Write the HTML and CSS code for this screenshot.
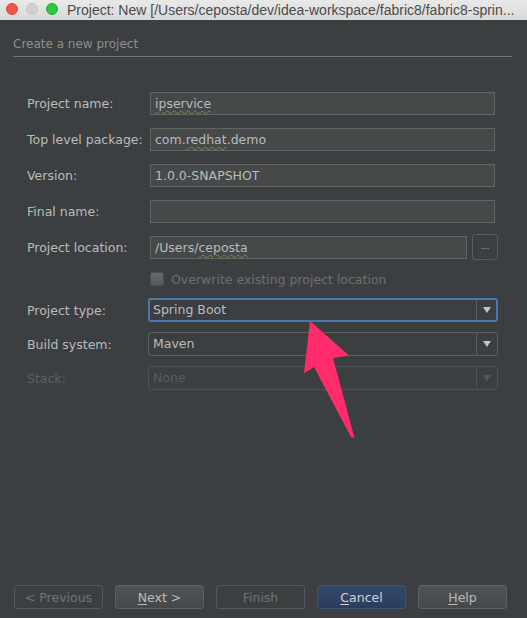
FILE: index.html
```html
<!DOCTYPE html>
<html>
<head>
<meta charset="utf-8">
<link rel="stylesheet" href="styles.css">
</head>
<body>
<div class="window">
  <div class="titlebar">
    <span class="light red"></span>
    <span class="light gray"></span>
    <span class="light green"></span>
    <span class="title">Project: New [/Users/ceposta/dev/idea-workspace/fabric8/fabric8-sprin...</span>
  </div>
  <div class="heading">Create a new project</div>
  <div class="form">
    <div class="row"><label class="label">Project name:</label><div class="field"><span class="typo">ipservice</span></div></div>
    <div class="row"><label class="label">Top level package:</label><div class="field">com.<span class="typo">redhat</span>.demo</div></div>
    <div class="row"><label class="label">Version:</label><div class="field">1.0.0-SNAPSHOT</div></div>
    <div class="row"><label class="label">Final name:</label><div class="field"></div></div>
    <div class="row"><label class="label">Project location:</label>
      <div class="locrow"><div class="field loc">/Users/<span class="typo">ceposta</span></div><div class="browse">...</div></div>
    </div>
    <div class="row check-row"><span></span>
      <div class="checkwrap"><span class="checkbox"></span><span class="checklabel">Overwrite existing project location</span></div>
    </div>
    <div class="row combo-row"><label class="label">Project type:</label>
      <div class="combo focused"><span class="combo-text">Spring Boot</span><span class="combo-btn"><span class="tri"></span></span></div>
    </div>
    <div class="row combo-row"><label class="label">Build system:</label>
      <div class="combo"><span class="combo-text">Maven</span><span class="combo-btn"><span class="tri"></span></span></div>
    </div>
    <div class="row combo-row"><label class="label disabled">Stack:</label>
      <div class="combo disabled"><span class="combo-text">None</span><span class="combo-btn"><span class="tri"></span></span></div>
    </div>
  </div>
  <div class="footer">
    <div class="btn off">&lt; Previous</div>
    <div class="btn"><u>N</u>ext &gt;</div>
    <div class="btn off">Finish</div>
    <div class="btn primary"><u>C</u>ancel</div>
    <div class="btn"><u>H</u>elp</div>
  </div>
  <svg class="arrow" width="527" height="618" viewBox="0 0 527 618">
    <polygon points="310,321 349,355.5 333,358 354.5,438 351,437 314,367 304,373.5" fill="#ff2b6b"/>
  </svg>
</div>
</body>
</html>
```
FILE: styles.css
```css
* { box-sizing: border-box; }
html, body { margin: 0; padding: 0; }
body {
  width: 527px;
  height: 618px;
  overflow: hidden;
  background: #3c3f41;
  font-family: "DejaVu Sans", sans-serif;
  font-size: 12.5px;
  color: #bbbbbb;
}
.window {
  position: relative;
  width: 527px;
  height: 618px;
  display: flex;
  flex-direction: column;
  background: #3c3f41;
}
.titlebar {
  height: 20px;
  flex: none;
  display: flex;
  align-items: center;
  padding-left: 6px;
  background: linear-gradient(#e9e9e9, #d9d9d9);
}
.light {
  width: 12px;
  height: 12px;
  border-radius: 50%;
  margin-right: 8px;
  margin-top: -2px;
  flex: none;
}
.light.red { background: #f2524d; border: 1px solid #de4541; }
.light.gray { background: #d0d0d0; border: 1px solid #c2c2c2; }
.light.green { background: #2fc841; border: 1px solid #26ad35; }
.title {
  margin-left: 1px;
  font-family: "Liberation Sans", Arial, sans-serif;
  font-size: 14px;
  color: #4b4b4b;
  white-space: nowrap;
  margin-top: -1px;
}
.heading {
  margin: 17px 15px 0 13px;
  padding-bottom: 4px;
  line-height: 15px;
  font-size: 12px;
  color: #8e8e8e;
  border-bottom: 1px solid #737373;
}
.form {
  margin-top: 28px;
  padding: 0 29px 0 27px;
}
.row {
  display: grid;
  grid-template-columns: 123px 1fr;
  align-items: center;
  height: 36px;
}
.check-row { height: 28px; }
.combo-row { height: 34px; }
.label {
  color: #bbbbbb;
  white-space: nowrap;
  line-height: 15px;
}
.label.disabled { color: #5e6062; }
.field {
  height: 23px;
  width: 345px;
  background: #45494a;
  border: 1px solid #646464;
  padding: 0 4px;
  line-height: 21px;
  color: #bbbbbb;
  white-space: nowrap;
}
.typo {
  text-decoration: underline wavy #5f9a45;
  text-decoration-thickness: 1px;
  text-underline-offset: 2px;
}
.locrow {
  display: flex;
  align-items: center;
  gap: 5px;
}
.field.loc { width: 317px; }
.browse {
  width: 26px;
  height: 26px;
  border: 1px solid #5a5c5e;
  border-radius: 3px;
  display: flex;
  align-items: center;
  justify-content: center;
  font-size: 9px;
  color: #bbbbbb;
  padding-bottom: 2px;
}
.checkwrap {
  display: flex;
  align-items: center;
  gap: 7px;
}
.checkbox {
  width: 14px;
  height: 14px;
  border-radius: 2px;
  background: linear-gradient(#67696b, #56595b);
  border: 1px solid #4b4e50;
}
.checklabel { color: #6d6f70; }
.combo {
  margin-left: -2px;
  width: 350px;
  height: 24px;
  border: 1px solid #5e6060;
  border-radius: 3px;
  display: flex;
  align-items: stretch;
}
.combo.focused {
  border: 2px solid #4a78ae;
}
.combo-text {
  flex: 1;
  padding-left: 4px;
  line-height: 21px;
  color: #bbbbbb;
}
.combo.focused .combo-text { padding-left: 3px; line-height: 20px; }
.combo-btn {
  width: 21px;
  border-left: 1px solid #5e6060;
  display: flex;
  align-items: center;
  justify-content: center;
}
.combo.focused .combo-btn { width: 20px; }
.tri {
  width: 0;
  height: 0;
  border-left: 4.5px solid transparent;
  border-right: 4.5px solid transparent;
  border-top: 6px solid #c4c4c4;
}
.combo.disabled { border-color: #4f5254; }
.combo.disabled .combo-text { color: #5a5c5e; }
.combo.disabled .combo-btn { border-left-color: #4f5254; }
.combo.disabled .tri { border-top-color: #565859; }
.footer {
  margin-top: auto;
  padding: 0 20px 9px 14px;
  display: flex;
  justify-content: space-between;
}
.btn {
  width: 89px;
  height: 24px;
  border-radius: 3px;
  border: 1px solid #5d6062;
  background: linear-gradient(#4f5355, #46494b);
  color: #bbbbbb;
  display: flex;
  align-items: center;
  justify-content: center;
  line-height: 15px;
}
.btn u { text-underline-offset: 2px; }
.btn.off {
  background: #3c3f41;
  border-color: #56595b;
  color: #727476;
}
.btn.primary {
  background: linear-gradient(#34496b, #2a3d5c);
  border-color: #3f5576;
  color: #cfd3d9;
}
.arrow {
  position: absolute;
  left: 0;
  top: 0;
  pointer-events: none;
}
```
